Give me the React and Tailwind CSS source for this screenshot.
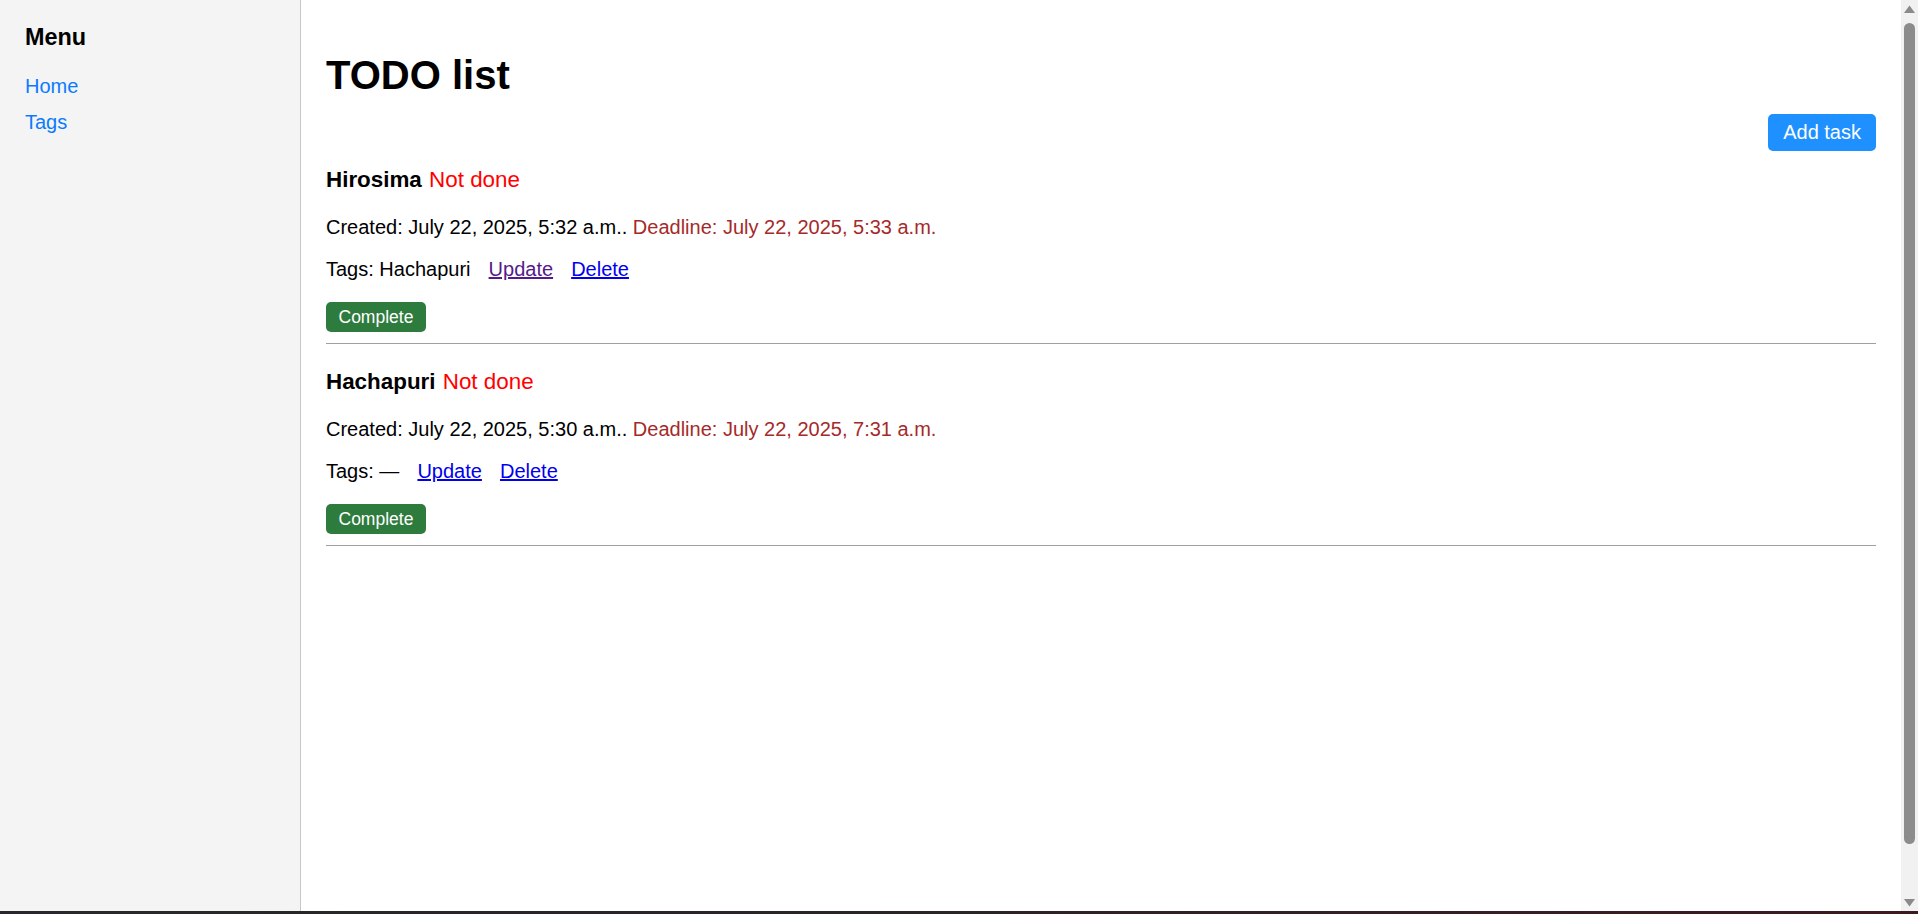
export default function App() {
  const tasks = [
    {
      title: "Hirosima",
      created: "July 22, 2025, 5:32 a.m.",
      deadline: "July 22, 2025, 5:33 a.m.",
      tags: "Hachapuri",
      updateVisited: true,
    },
    {
      title: "Hachapuri",
      created: "July 22, 2025, 5:30 a.m.",
      deadline: "July 22, 2025, 7:31 a.m.",
      tags: "—",
      updateVisited: false,
    },
  ];

  return (
    <div className="h-[914px] w-full overflow-hidden flex flex-col bg-white text-black font-['Liberation_Sans',Arial,sans-serif]">
      <div className="flex h-[911px]">
        <aside className="w-[301px] shrink-0 bg-[#f4f4f4] border-r border-[#c8c8c8] pl-[25px] pt-[24px]">
          <h3 className="text-[23.4px] leading-[27px] font-bold">Menu</h3>
          <nav className="mt-[24px] flex flex-col items-start gap-[13px] text-[20px] leading-[23px]">
            <a href="#" className="text-[#0a7bff]">Home</a>
            <a href="#" className="text-[#0a7bff]">Tags</a>
          </nav>
        </aside>

        <main className="flex-1 min-w-0 pt-[25px] px-[25px]">
          <h1 className="mt-[27px] text-[40px] leading-[46px] font-bold">TODO list</h1>
          <div className="mt-[16px] flex justify-end">
            <button className="bg-[#1e90ff] text-white text-[20px] leading-[23px] px-[15px] py-[7px] rounded-[5px]">
              Add task
            </button>
          </div>

          {tasks.map((t) => (
            <div key={t.title} className="pt-[16px]">
              <div className="text-[22.4px] leading-[25px]">
                <span className="font-bold">{t.title}</span>{" "}
                <span className="ml-[1px] text-[#ff0000]">Not done</span>
              </div>
              <p className="mt-[24px] text-[20px] leading-[23px]">
                Created: {t.created}.{" "}
                <span className="text-[#a52a2a]">Deadline: {t.deadline}</span>
              </p>
              <p className="mt-[19px] text-[20px] leading-[23px]">
                Tags: {t.tags}{" "}
                <a
                  href="#"
                  className={
                    "ml-[12.5px] underline " +
                    (t.updateVisited ? "text-[#551a8b]" : "text-[#0000ee]")
                  }
                >
                  Update
                </a>{" "}
                <a href="#" className="ml-[12.5px] underline text-[#0000ee]">
                  Delete
                </a>
              </p>
              <button className="mt-[21px] block bg-[#2e7b3e] text-white text-[17.5px] leading-[20px] px-[12.5px] py-[5px] rounded-[5px]">
                Complete
              </button>
              <div className="mt-[11px] mb-[9px] h-px bg-[#a0a0a0]" />
            </div>
          ))}
        </main>

        <div className="w-[17px] shrink-0 bg-[#f1f1f1] flex flex-col items-center">
          <div className="h-[17px] flex items-center justify-center">
            <svg width="11" height="8" viewBox="0 0 11 8">
              <path d="M5.5 0.5 L11 8 L0 8 Z" fill="#8a8a8a" />
            </svg>
          </div>
          <div className="mt-[6px] h-[821px] w-[11px] rounded-full bg-[#8c8c8c]" />
          <div className="flex-1" />
          <div className="h-[17px] flex items-center justify-center">
            <svg width="11" height="8" viewBox="0 0 11 8">
              <path d="M0 0 L11 0 L5.5 7.5 Z" fill="#8a8a8a" />
            </svg>
          </div>
        </div>
      </div>
      <div className="h-[3px] bg-linear-to-r from-[#29272d] via-[#2c2228] to-[#3d1a1e]" />
    </div>
  );
}
